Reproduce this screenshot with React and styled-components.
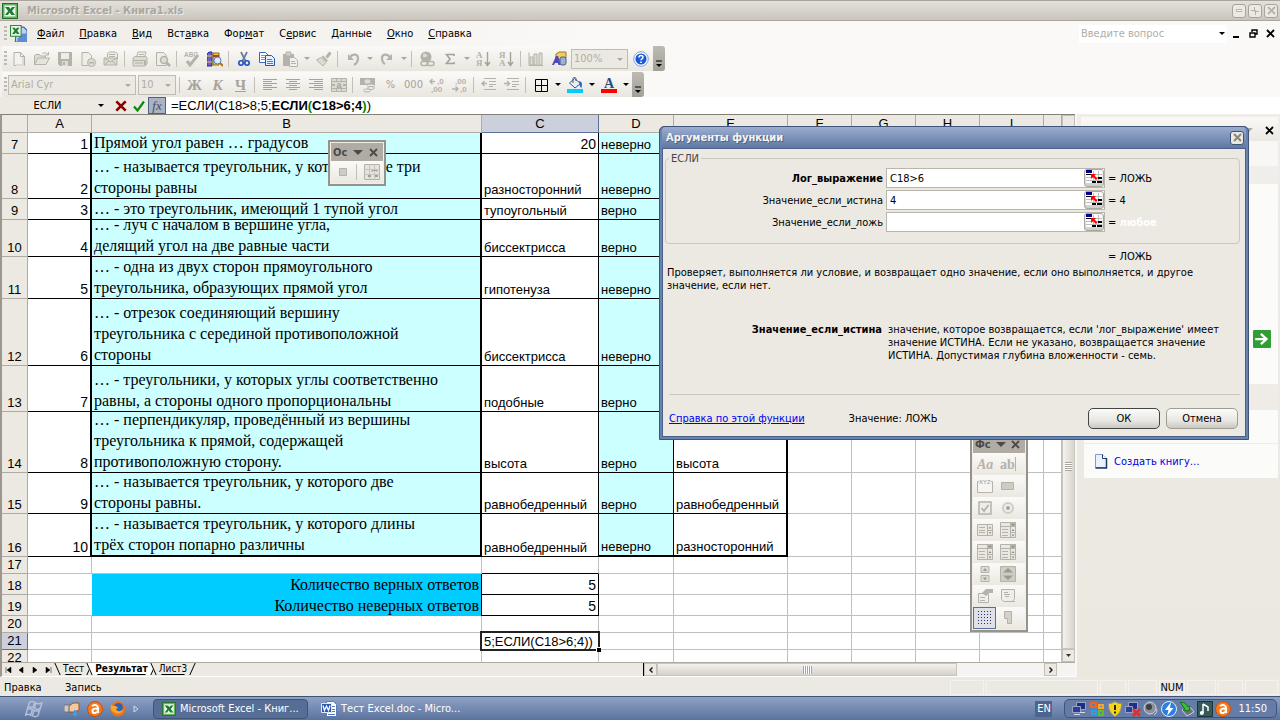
import React from 'react';
import styled, { createGlobalStyle, css } from 'styled-components';

const ui = `'DejaVu Sans Condensed', 'DejaVu Sans', sans-serif`;
const arial = `'Liberation Sans', Arial, sans-serif`;
const times = `'Liberation Serif', 'Times New Roman', serif`;

const GlobalStyle = createGlobalStyle`
  * {
    box-sizing: border-box;
  }

  body {
    margin: 0;
    overflow: hidden;
    background: #ece9e2;
    color: #000;
    font-family: ${ui};
    font-size: 11px;
    line-height: 13px;
  }

  button,
  input,
  select {
    margin: 0;
    padding: 0;
    border: 0;
    border-radius: 0;
    background: none;
    color: inherit;
    font: inherit;
    outline: none;
  }

  svg {
    display: block;
    flex: none;
  }
`;

/* ---------- icons ---------- */

const g = '#b5b2aa';
const l = '#dedbd3';

const glyphs = {
  newFile: (
    <>
      <path d='M3 1.5h6.500l4 4v9H3z' fill='#f4f2ee' stroke={g} />
      <path d='M9.500 1.500v4h4' fill='none' stroke={g} />
      <path d='M12 6v8H5' fill='none' stroke={l} strokeWidth='2' />
    </>
  ),
  open: (
    <>
      <path d='M.5 13.500v-9l1-1h4l1 1.500h5V7' fill={l} stroke={g} />
      <path d='M.5 13.500L4 7h11.500l-3.500 6.500z' fill='#e6e3dc' stroke={g} />
      <path d='M8 3c2-2 4-1.500 6 .5M14.500 1v3H11' fill='none' stroke={g} />
    </>
  ),
  save: (
    <>
      <path d='M1 1h14v14H3l-2-2z' fill={g} />
      <path d='M4 2h8v6H4z' fill='#efede8' />
      <path d='M5 10h6v5H5z' fill={l} />
      <path d='M6 11h2v3H6z' fill={g} />
    </>
  ),
  permission: (
    <>
      <path d='M2 1.500h6.500l3 3v10H2z' fill='#efede8' stroke={g} />
      <circle cx='11.500' cy='11.500' r='4' fill={l} stroke={g} />
      <path d='M9 11h5v1.500H9z' fill={g} />
    </>
  ),
  mail: (
    <>
      <path d='M4.500 6V2.500l2-1.500h6l2 2v5' fill='#efede8' stroke={g} />
      <path d='M1 7h13v7H1z' fill={l} stroke={g} />
      <path d='M1 7l6.500 4L14 7M1 14l5-4M14 14l-5-4' fill='none' stroke={g} />
      <path d='M6 3.500h6M6 5.500h6' stroke={g} />
    </>
  ),
  print: (
    <>
      <path d='M4.500 6l1.500-5h8l-1.500 5' fill='#f2f0ec' stroke={g} />
      <path d='M1 7l2-1.500h11l1 1.500v6l-2 2H1z' fill={l} stroke={g} />
      <path d='M1 9.500h12M3 12h8M7 3.500h5' stroke={g} />
      <path d='M13 9v5' stroke={g} strokeWidth='2' />
    </>
  ),
  preview: (
    <>
      <path d='M1.500 1.500h7l3 3v10h-10z' fill='#efede8' stroke={g} />
      <circle cx='9' cy='9' r='3.500' fill={l} stroke={g} strokeWidth='1.500' />
      <path d='M11.500 11.500l3.500 3.500' stroke={g} strokeWidth='2.500' />
    </>
  ),
  spelling: (
    <>
      <text x='0' y='6' fontFamily='Liberation Sans' fontWeight='700' fontSize='6.500' fill={g}>
        ABC
      </text>
      <path d='M3 10l3 4 8-10' fill='none' stroke={g} strokeWidth='3' />
    </>
  ),
  research: (
    <>
      <path d='M0 3l2-2h3v14H0z' fill='#6a5fd0' stroke='#2b2a86' />
      <path d='M6 2h6v12H6z' fill='#f2c83a' stroke='#8a6a13' />
      <path d='M0 5h5M0 11h5' stroke='#f2c83a' />
      <path d='M6 5h6' stroke='#b03a2c' strokeWidth='2' />
      <circle cx='10.500' cy='9.500' r='3.500' fill='#d9efff' stroke='#4a7fc8' />
      <path d='M13 12l3 3' stroke='#b0721a' strokeWidth='2' />
    </>
  ),
  cut: (
    <>
      <path d='M5 1l4.500 9M11 1L6.500 10' fill='none' stroke='#6d7f9e' strokeWidth='1.800' />
      <circle cx='5' cy='12' r='2.200' fill='none' stroke='#1d4fc4' strokeWidth='1.600' />
      <circle cx='11' cy='12' r='2.200' fill='none' stroke='#1d4fc4' strokeWidth='1.600' />
    </>
  ),
  copy: (
    <>
      <path d='M.5 1.500h6l3 3v7h-9z' fill='#fff' stroke='#3b64b4' />
      <path d='M2 4.500h4M2 6.500h5M2 8.500h4' stroke='#6f94d8' />
      <path d='M6.500 4.500h6l3 3v7h-9z' fill='#e4eeff' stroke='#2a56ab' />
      <path d='M8 8.500h5M8 10.500h6M8 12.500h6' stroke='#4c7bd0' />
    </>
  ),
  paste: (
    <>
      <path d='M1 3h11v12H1z' fill={g} />
      <path d='M4 1h5v4H4z' fill='#d2cfc7' stroke={g} />
      <path d='M7.500 6.500h5l3 3v6h-8z' fill='#f2f0ec' stroke={g} />
      <path d='M9 10.500h4M9 12.500h5' stroke={g} />
    </>
  ),
  painter: (
    <>
      <path d='M14.500 1.500l-4 5' stroke={g} strokeWidth='3' />
      <path d='M7 4.500l5 5-1.500 1.500-5-5z' fill={g} />
      <path d='M5 6.500l5 5-3 3.500-6.500-6z' fill={l} stroke={g} />
    </>
  ),
  undo: (
    <>
      <path d='M3 3v6h6z' fill={g} />
      <path d='M4.500 6.500c4-5 9-3 8.500 1.500-.3 3-2 5-4 6' fill='none' stroke={g} strokeWidth='2.200' />
    </>
  ),
  redo: (
    <>
      <path d='M13 3v6H7z' fill={g} />
      <path d='M11.500 6.500c-4-5-9-3-8.500 1.500.3 3 1 4 3 5' fill='none' stroke={g} strokeWidth='2.200' />
    </>
  ),
  link: (
    <>
      <circle cx='7' cy='6' r='5.500' fill={g} />
      <path d='M4 3c2-1 3 0 4 1s-2 3-4 2z' fill={l} />
      <rect x='2' y='10.500' width='7' height='4' rx='2' fill='#efede8' stroke={g} strokeWidth='1.500' />
      <rect x='8' y='10.500' width='7' height='4' rx='2' fill='none' stroke={g} strokeWidth='1.500' />
    </>
  ),
  sum: <path d='M12 5V3.500H4.500L8 8l-3.500 4.500H12V11' fill='none' stroke='#a5a29b' strokeWidth='1.600' />,
  sortAsc: (
    <>
      <text x='0' y='7' fontFamily='Liberation Serif' fontWeight='700' fontSize='9' fill={g}>А</text>
      <text x='0' y='15' fontFamily='Liberation Serif' fontWeight='700' fontSize='9' fill={g}>Я</text>
      <path d='M11.500 1v12M9 11l2.500 3.500L14 11' fill='none' stroke='#a5a29b' strokeWidth='1.400' />
    </>
  ),
  sortDesc: (
    <>
      <text x='0' y='7' fontFamily='Liberation Serif' fontWeight='700' fontSize='9' fill={g}>Я</text>
      <text x='0' y='15' fontFamily='Liberation Serif' fontWeight='700' fontSize='9' fill={g}>А</text>
      <path d='M11.500 1v12M9 11l2.500 3.500L14 11' fill='none' stroke='#a5a29b' strokeWidth='1.400' />
    </>
  ),
  chart: (
    <>
      <path d='M1 1.500v13h14' fill='none' stroke={g} />
      <path d='M2 6h3v8H2zM6 3h3v11H6zM11 2h3v12h-3z' fill={l} stroke={g} />
    </>
  ),
  drawing: (
    <>
      <path d='M5 3l3-2h7v6l-3 2H5z' fill='#f2cc60' stroke='#9a7a25' />
      <path d='M1 14L5 5h2l3 9H7.500l-.7-2H4l-1 2z' fill='#4d49b8' />
      <rect x='9' y='6' width='6' height='8' rx='2' fill='#9bb1d6' stroke='#4a5f8a' />
    </>
  ),
  help: (
    <>
      <circle cx='8' cy='8' r='7.300' fill='#fff' stroke='#7fa0de' />
      <circle cx='8' cy='8' r='5.600' fill='#1c59d4' />
      <path d='M6 6.500c0-2.700 4-2.700 4-.2 0 1.500-2 1.500-2 3' fill='none' stroke='#fff' strokeWidth='1.500' />
      <path d='M7.200 10.500h1.600V12H7.200z' fill='#fff' />
    </>
  ),
  left: <path d='M1 2.500h14M1 4.500h9M1 6.500h14M1 8.500h9M1 10.500h14M1 12.500h9' stroke='#a5a29b' />,
  center: <path d='M1 2.500h14M4 4.500h8M1 6.500h14M4 8.500h8M1 10.500h14M4 12.500h8' stroke='#a5a29b' />,
  right: <path d='M1 2.500h14M6 4.500h9M1 6.500h14M6 8.500h9M1 10.500h14M6 12.500h9' stroke='#a5a29b' />,
  merge: (
    <>
      <path d='M.5 1.500h15v13H.5zM.5 4.500h15M.5 11.500h15M5.500 1.500v3M10.500 1.500v3M5.500 11.500v3M10.500 11.500v3' fill={l} stroke={g} />
      <path d='M1 8h3M12 8h3' stroke={g} strokeWidth='2' />
      <text x='5.500' y='10.500' fontFamily='Liberation Sans' fontWeight='700' fontSize='9' fill='#a5a29b'>a</text>
    </>
  ),
  currency: (
    <>
      <path d='M0 1h15v7H0z' fill={g} />
      <ellipse cx='7.500' cy='4.500' rx='3' ry='2.200' fill={l} />
      <ellipse cx='11' cy='8.500' rx='3.500' ry='1.500' fill='#efede8' stroke={g} />
      <ellipse cx='11' cy='11' rx='3.500' ry='1.500' fill='#efede8' stroke={g} />
      <ellipse cx='7' cy='13.500' rx='3.500' ry='1.500' fill='#efede8' stroke={g} />
    </>
  ),
  incDecimal: (
    <>
      <path d='M1 4.500h5M3.500 2L1 4.500 3.500 7' fill='none' stroke={g} strokeWidth='1.400' />
      <text x='8' y='7' fontFamily='Liberation Sans' fontWeight='700' fontSize='8' fill={g}>,0</text>
      <text x='2' y='15' fontFamily='Liberation Sans' fontWeight='700' fontSize='8' fill={g}>,00</text>
    </>
  ),
  decDecimal: (
    <>
      <text x='3' y='7' fontFamily='Liberation Sans' fontWeight='700' fontSize='8' fill={g}>,00</text>
      <path d='M0 12h6M3.500 9.500L6 12l-2.500 2.500' fill='none' stroke={g} strokeWidth='1.400' />
      <text x='8' y='15' fontFamily='Liberation Sans' fontWeight='700' fontSize='8' fill={g}>,0</text>
    </>
  ),
  outdent: (
    <>
      <path d='M3 1.500h12M8 4.500h7M8 7.500h7M8 9.500h4M3 12.500h12' stroke={g} />
      <path d='M1 6.500h5M3.500 4L1 6.500 3.500 9' fill='none' stroke={g} strokeWidth='1.400' />
    </>
  ),
  indent: (
    <>
      <path d='M3 1.500h12M8 4.500h7M8 7.500h7M8 9.500h4M3 12.500h12' stroke={g} />
      <path d='M0 6.500h5M3 4l2.500 2.500L3 9' fill='none' stroke={g} strokeWidth='1.400' />
    </>
  ),
  borders: <path d='M2.500 2.500h12v12h-12zM2.500 8.500h12M8.500 2.500v12' fill='none' stroke='#000' />,
  fill: (
    <>
      <path d='M7.500 1.500l6 5L8 11 2.500 6z' fill='#e8eef9' stroke='#2a5a9e' />
      <path d='M6 6V1.500c0-1.500 3-1.500 3 0V4' fill='none' stroke='#555' />
      <path d='M12 4c4 1 3 4 2.500 7-2-1-2-3-2-5z' fill='#2c67b8' />
      <path d='M0 12h16v4H0z' fill='#0cf' />
    </>
  ),
  fontColor: (
    <>
      <text x='3' y='11' fontFamily='Liberation Serif' fontWeight='700' fontSize='14' fill='#2b4a86'>A</text>
      <path d='M0 12h16v4H0z' fill='#f00' />
    </>
  ),
  excel: (
    <>
      <path d='M0 0h16v16H0z' fill='#1f6f2a' />
      <path d='M1 1h14v14H1z' fill='#5fb45c' />
      <path d='M2.500 2.500h11v11h-11z' fill='#eef7ec' />
      <path d='M3 4h4l1.500 2L10 4h3l-3 4 3 4H9.500L7.500 9.500 6 12H3l3.200-4z' fill='#1f7a33' />
    </>
  ),
  excelDoc: (
    <>
      <path d='M6 2h7l3 3v11H5z' fill='#b9d2f5' stroke='#3a62a8' />
      <path d='M12 8h4v8H7v-3' fill='#5f8bd2' />
      <path d='M.5.5h10v10H.5z' fill='#e9f5e6' stroke='#2a8a38' />
      <path d='M2 2.500h2.500L5.500 4l1-1.500H9L6.800 5.500 9 8.500H6.500L5.500 7l-1 1.500H2l2.200-3z' fill='#1f7a33' />
    </>
  ),
  word: (
    <>
      <path d='M5.500.5h7l3 3v12h-10z' fill='#fff' stroke='#5a7ab5' />
      <path d='M11 5.500h3M11 8.500h3M11 10.500h3M7 13.500h7' stroke='#5a7ab5' />
      <path d='M.5 2.500h10v9H.5z' fill='#2c58b0' stroke='#dfe9fb' />
      <path d='M2 4.500l1.500 5L5.500 5l2 4.500 1.500-5' fill='none' stroke='#fff' strokeWidth='1.300' />
    </>
  ),
  designMode: (
    <>
      <path d='M.5.5h15v15H.5z' fill='#e6e3dc' stroke={g} />
      <path d='M.5 5.500h15M.5 10.500h15M5.500.5v15M10.500.5v15' stroke='#c8c5bd' />
      <path d='M8 8V6.500h5V8' fill='none' stroke='#a5a29b' />
      <path d='M4 11h3v2H4zM11 11h3v2h-3z' fill='#a5a29b' />
    </>
  ),
  stop: <path d='M4.500 4.500h7v7h-7z' fill='#cfccc3' stroke={g} />,
  label: (
    <text x='0' y='13' fontFamily='Liberation Serif' fontStyle='italic' fontWeight='700' fontSize='14' fill={g}>Aa</text>
  ),
  textBox: (
    <>
      <text x='0' y='13' fontFamily='Liberation Serif' fontSize='14' fontWeight='700' fill={g}>ab</text>
      <path d='M15.500 1v14' stroke={g} />
    </>
  ),
  groupBox: (
    <>
      <path d='M2 3.500H.5v11h15v-11H14' fill='#f6f5f2' stroke={g} />
      <text x='2' y='6' fontFamily='Liberation Sans' fontWeight='700' fontSize='6' fill={g}>XYZ</text>
    </>
  ),
  button: <path d='M1.500 4.500h12v7h-12z' fill='#cfccc3' stroke={g} />,
  check: (
    <>
      <path d='M2 2h12v12H2z' fill='#f0eee9' stroke={g} strokeWidth='1.500' />
      <path d='M4.500 8l2.500 3 4.500-6' fill='none' stroke={g} strokeWidth='1.800' />
    </>
  ),
  radio: (
    <>
      <circle cx='8' cy='8' r='5' fill='#f0eee9' stroke='#cfccc3' strokeWidth='2' />
      <circle cx='8' cy='8' r='2' fill='#a5a29b' />
    </>
  ),
  list: (
    <>
      <path d='M.5 2.500h15v11H.5z' fill='#ebe8e2' stroke={g} />
      <path d='M2 5.500h6M2 8.500h6M2 10.500h6M10.500 2.500v11M10.500 8.500h5' stroke={g} />
      <path d='M11.500 6.500h3L13 4.500zM11.500 10h3L13 12z' fill='#9b9890' />
    </>
  ),
  combo: (
    <>
      <path d='M.5.5h15v15H.5z' fill='#ebe8e2' stroke={g} />
      <path d='M10 0h6v5h-6z' fill={g} />
      <path d='M.5 4.500h15M2 7.500h6M2 10.500h6M2 13.500h6M10.500 5v11M10.500 10.500h5' stroke={g} />
      <path d='M11.500 2h3L13 4zM11.500 9h3L13 7zM11.500 12.500h3L13 14.500z' fill='#8f8c84' />
    </>
  ),
  scroll: (
    <>
      <path d='M4 .5h8v6H4zM4 9.500h8v6H4z' fill={l} stroke={g} />
      <path d='M6 5h4L8 2zM6 11.500h4l-2 3z' fill='#9b9890' />
    </>
  ),
  spin: (
    <>
      <path d='M.5.5h15v15H.5z' fill='#cfccc3' stroke={g} />
      <path d='M3 6.500h10L8 2zM3 9.500h10L8 14z' fill='#9b9890' />
    </>
  ),
  props: (
    <>
      <path d='M1.500 5.500h10v9h-10z' fill='#f0eee9' stroke={g} />
      <path d='M3 9.500h5M3 12.500h5' stroke={g} />
      <path d='M5 5l4-4h7v4h-4l-3 3z' fill={g} />
    </>
  ),
  code: (
    <>
      <path d='M1.500 1.500h13v9l-2 3h-9l-2-2z' fill='#f0eee9' stroke={g} />
      <path d='M4 4.500h4M4 6.500h6M5 8.500h4M6 13.500h9' stroke={g} />
    </>
  ),
  grid: (
    <path
      d='M1 1.500h15M1 4.500h15M1 7.500h15M1 10.500h15M1 13.500h15'
      stroke='#24386b'
      strokeDasharray='1 2'
    />
  ),
  run: <path d='M4.500 1.500h7v12h-4v-5h-3z' fill='#d4d1c9' stroke={g} />,
  picker: (
    <>
      <path d='M0 1h16v12H0z' fill='#fff' />
      <path d='M0 4.500h16M0 7.500h16M0 10.500h16M7.500 1v12M12.500 1v12' stroke='#bbb' />
      <path d='M0 0h6v3H0z' fill='#00008b' />
      <path d='M0 4h6v1H0zM12 7h4v2h-4zM6 11h4v2H6zM11 11h5v2h-5z' fill='#000' />
      <path d='M5 4h5L8.500 5.500l3 3L10 10 7 7 5 9z' fill='#f00' />
    </>
  ),
  sheet: (
    <>
      <path d='M2.500 1.500h7l4 4v9h-11z' fill='#eaf1fc' stroke='#7f9bc8' />
      <path d='M9.500 1.500v4h4' fill='#fff' stroke='#1f3a66' />
      <path d='M13.500 5v10h-11' fill='none' stroke='#1f3a66' strokeWidth='1.500' />
    </>
  ),
  windows: (
    <>
      <path d='M4 2c2-1 3-1 4.500 0L7 7C5.500 6 4 6 2.500 7zM9.500 2.500C11 3.500 13 3.500 15 2.500l-1.500 5c-1.500 1-3.500 1-5 0z' fill='none' stroke='#b3bfd6' strokeWidth='1.300' />
      <path d='M2 8.500c2-1 3-1 4.500 0L5 13.500c-1.500-1-3-1-4.500 0zM8 9c1.500 1 3.500 1 5 0l-1.500 5c-1.500 1-3.500 1-5 0z' fill='none' stroke='#b3bfd6' strokeWidth='1.300' />
    </>
  ),
  drive: (
    <>
      <path d='M0 4h8v7H0z' fill='#c9ccd0' stroke='#777' />
      <path d='M5 5l4-3h6v7l-4 2H5z' fill='#f2c9a0' stroke='#8a5a35' />
      <path d='M8 12h6l-3 4z' fill='#3fa0ee' />
      <path d='M10 9h2v4h-2z' fill='#3fa0ee' />
    </>
  ),
  avast: (
    <>
      <circle cx='8' cy='8' r='7.500' fill='#f47a1c' stroke='#c8500a' />
      <path d='M5 5c3-2 6-1 6 2v5M11 8c-3-1-6 0-5.500 2.500s4.500 2 5.500-1' fill='none' stroke='#fff' strokeWidth='2' />
    </>
  ),
  firefox: (
    <>
      <circle cx='8' cy='8' r='7.500' fill='#e8731a' />
      <circle cx='8.500' cy='6.500' r='4.500' fill='#2f62b8' />
      <path d='M1 4c2 1 3 1 5 1l2 2-2 1c1 3 5 3 7 0 0 4-4 6-8 4S0 7 1 4z' fill='#f9a72b' />
    </>
  ),
  network: (
    <>
      <path d='M5.500 1.500h9v7h-9z' fill='#1c2f88' stroke='#9aa3c0' />
      <path d='M1.500 5.500h8v6h-8z' fill='#2a409c' stroke='#9aa3c0' />
      <path d='M3 13.500h6M9 11.500h5' stroke='#d7dbe6' />
    </>
  ),
  office: (
    <>
      <path d='M2 2h5v4H2z' fill='none' stroke='#f0642a' strokeWidth='2' />
      <path d='M10 4h4v3h-4z' fill='none' stroke='#f5a62c' strokeWidth='2' />
      <path d='M3 10h4v3H3z' fill='none' stroke='#2f9fe8' strokeWidth='2' />
      <path d='M10 10h4v4h-4z' fill='none' stroke='#69b832' strokeWidth='2' />
    </>
  ),
  shield: (
    <>
      <path d='M8 .5c2 1.500 4 2 6.500 2 0 6-1.500 10-6.500 13C3 12.500 1.500 8.500 1.500 2.500 4 2.500 6 2 8 .5z' fill='#f7d516' stroke='#8d8f96' />
      <path d='M7 4h2v5H7zM7 10.500h2v2H7z' fill='#222' />
    </>
  ),
  offline: (
    <>
      <path d='M3.500 1.500h9v7h-9z' fill='#1c2f88' stroke='#9aa3c0' />
      <path d='M.5 5.500h7v6h-7z' fill='#2a409c' stroke='#9aa3c0' />
      <path d='M8 8l7 7M15 8l-7 7' stroke='#f02a20' strokeWidth='2.500' />
    </>
  ),
  speaker: (
    <>
      <circle cx='7' cy='7' r='6' fill='#8d9096' stroke='#d0d3d8' />
      <circle cx='6' cy='6' r='3' fill='#3d4046' />
      <path d='M11 14c2-1 3-3 3-6' fill='none' stroke='#cdd3e6' />
    </>
  ),
  bolt: (
    <>
      <circle cx='8' cy='8' r='7.500' fill='#2a7fe0' stroke='#e3eefc' />
      <path d='M10 1L4 9h3.500L6 15l6.500-8H9z' fill='#fff' />
    </>
  ),
  usb: (
    <>
      <path d='M3 9l8-3 4 5-7 4z' fill='#6d7178' stroke='#cdd0d5' />
      <path d='M1 1l5 1 3 4 2-1-1 5-6-1 2-1z' fill='#3cc23a' stroke='#16771a' />
    </>
  ),
  note: (
    <>
      <path d='M.5.500h15v15H.5z' fill='#355a58' stroke='#1c3434' />
      <path d='M6 3v9M6 3l5 3v4' fill='none' stroke='#fff' strokeWidth='1.500' />
      <circle cx='4.800' cy='12' r='2' fill='#fff' />
    </>
  ),
  go: (
    <>
      <rect width='16' height='16' rx='1' fill='#2e9e35' />
      <path d='M2 8h10M7 3.500L12 8 7 12.500' fill='none' stroke='#fff' strokeWidth='2' />
    </>
  ),
};

const Icon = ({ name, size = 16 }) => (
  <svg width={size} height={size} viewBox='0 0 16 16' aria-hidden='true'>
    {glyphs[name]}
  </svg>
);

const Cross = ({ size = 9, color = '#000', weight = 1.8 }) => (
  <svg width={size} height={size} viewBox='0 0 9 9' aria-hidden='true'>
    <path d='M1 1l7 7M8 1L1 8' stroke={color} strokeWidth={weight} fill='none' />
  </svg>
);

/* ---------- window frame ---------- */

const Screen = styled.div`
  height: 100vh;
  display: flex;
  flex-direction: column;
`;

const TitleBar = styled.header`
  height: 21px;
  flex: none;
  display: flex;
  align-items: center;
  gap: 9px;
  padding: 0 2px;
  border-top: 1px solid #aaa69f;
  border-bottom: 1px solid #aaa69f;
  background: linear-gradient(#e4e1db, #c9c5bd);
`;

const WindowTitle = styled.h1`
  flex: 1;
  margin: 0;
  color: #aba79f;
  font-size: 11px;
  line-height: 13px;
  text-shadow: 1px 1px 0 #eeece7;
`;

const CaptionButtons = styled.div`
  display: flex;
  gap: 2px;
`;

const CaptionButton = styled.button`
  width: 14px;
  height: 14px;
  display: flex;
  align-items: center;
  justify-content: center;
  border: 1px solid ${(p) => (p.$active ? '#3f5478' : '#a8a49c')};
  border-radius: 3px;
  background: #ece9e2;
`;

const MenuBar = styled.nav`
  height: 25px;
  flex: none;
  display: flex;
  align-items: center;
  padding: 0 2px 0 4px;
  background: linear-gradient(90deg, #efece7, #faf9f7 600px);
`;

const Grip = styled.span`
  width: 3px;
  height: 16px;
  flex: none;
  background: repeating-linear-gradient(#bdbab2 0 2px, transparent 2px 4px);
`;

const Menu = styled.div`
  flex: 1;
  display: flex;
`;

const MenuItem = styled.button`
  padding: 0 8px 0 7px;
  line-height: 20px;
`;

const Ask = styled.div`
  width: 148px;
  height: 18px;
  display: flex;
  align-items: center;
  margin-right: 2px;
  background: #fff;
`;

const AskInput = styled.input`
  flex: 1;
  min-width: 0;
  padding-left: 2px;

  &::placeholder {
    color: #b0ada6;
    opacity: 1;
  }
`;

const ArrowButton = styled.button`
  width: 11px;
  height: 16px;
  flex: none;
  display: flex;
  align-items: center;
  justify-content: center;

  &::after {
    content: '';
    border: 3px solid transparent;
    border-top-color: ${(p) => (p.$on ? '#000' : '#aaa79f')};
    border-bottom: 0;
  }
`;

const DocButtons = styled.div`
  display: flex;
  align-items: center;
  gap: 2px;

  button {
    width: 15px;
    height: 15px;
    display: flex;
    align-items: center;
    justify-content: center;
  }
`;

/* ---------- toolbars ---------- */

const ToolbarDock = styled.div`
  flex: none;
  display: flex;
  flex-direction: column;
  gap: 1px;
  background: linear-gradient(90deg, #f3f1ed, #faf9f7 600px);
`;

const Toolbar = styled.div`
  width: fit-content;
  height: 25px;
  display: flex;
  align-items: center;
  margin-left: 2px;
  padding-left: 2px;
  border-radius: 3px;
  background: linear-gradient(#fbfaf8, #e9e6df);
`;

const Tool = styled.button`
  width: 23px;
  height: 22px;
  flex: none;
  display: flex;
  align-items: center;
  justify-content: center;
  color: #a5a29b;
`;

const Letter = styled.span`
  font-family: ${times};
  font-size: 15px;
  font-weight: bold;
  line-height: 16px;
  ${(p) => p.$italic && 'font-style: italic;'}
  ${(p) => p.$underline && 'text-decoration: underline;'}
`;

const Sep = styled.span`
  width: 6px;
  height: 16px;
  flex: none;
  background: linear-gradient(90deg, transparent 2px, #c2bfb8 2px 3px, transparent 3px);
`;

const ComboFrame = styled.div`
  position: relative;
  width: ${(p) => p.$width}px;
  height: 20px;
  margin: 0 1px;
  border: 1px solid #bfbcb4;
  background: #ece9e2;

  select {
    width: 100%;
    height: 100%;
    padding-left: 2px;
    appearance: none;
    color: #b0ada6;
    opacity: 1;
  }

  &::after {
    content: '';
    position: absolute;
    right: 4px;
    top: 8px;
    border: 3px solid transparent;
    border-top-color: #aaa79f;
    border-bottom: 0;
    pointer-events: none;
  }
`;

const ToolbarEnd = styled.button`
  width: 12px;
  height: 25px;
  margin-left: 1px;
  display: flex;
  align-items: flex-end;
  justify-content: center;
  padding-bottom: 3px;
  border-radius: 0 3px 3px 0;
  background: linear-gradient(#bdbab3, #a3a098);
`;

const FormulaBar = styled.div`
  height: 17px;
  flex: none;
  display: flex;
  align-items: center;
  background: #fff;
`;

const NameBox = styled.div`
  width: 148px;
  height: 17px;
  display: flex;
  align-items: center;
  background: #ece9e2;
`;

const NameInput = styled.input`
  width: 95px;
  text-align: center;
`;

const FormulaTools = styled.div`
  display: flex;
  align-items: center;
  justify-content: space-around;
  flex: 1;
  padding: 0 0 0 6px;

  button {
    display: flex;
  }
`;

const FxButton = styled.button`
  width: 18px;
  height: 17px;
  border: 1px solid #4a618c;
  background: #a9b2c7;
  color: #4d4d50;
  font-family: ${times};
  font-size: 13px;
  font-style: italic;
  line-height: 13px;
`;

const Formula = styled.div`
  flex: 1;
  padding-left: 5px;
  font-family: ${arial};
  font-size: 13px;
  line-height: 16px;

  i {
    color: #008a00;
    font-style: normal;
  }
`;

/* ---------- sheet ---------- */

const Workspace = styled.main`
  flex: 1;
  min-height: 0;
  display: flex;
`;

const Book = styled.section`
  flex: 1;
  min-width: 0;
  display: flex;
  flex-direction: column;
  border-top: 1px solid #848077;
  border-left: 2px solid #9b978f;
  border-bottom: 1px solid #fff;
`;

const SheetArea = styled.div`
  flex: 1;
  min-height: 0;
  display: flex;
`;

const Viewport = styled.div`
  flex: 1;
  min-width: 0;
  overflow: hidden;
  background: #fff;
`;

const Table = styled.table`
  width: 100%;
  border-collapse: separate;
  border-spacing: 0;
  table-layout: fixed;
  font-family: ${arial};
  font-size: 14px;

  th,
  td {
    padding: 0;
  }
`;

const Head = styled.th`
  height: ${(p) => p.$height || 17}px;
  border-right: 1px solid ${(p) => (p.$selected ? '#5a7099' : '#aeaba3')};
  border-bottom: 1px solid ${(p) => (p.$selected ? '#5a7099' : '#aeaba3')};
  background: ${(p) => (p.$selected ? '#ccd0dd' : '#ece9e2')};
  font-size: 13px;
  font-weight: normal;
  line-height: 16px;
  vertical-align: bottom;
`;

const line = (kind) =>
  ({ thin: '1px solid #000', thick: '2px solid #000', none: '0' })[kind] || '1px solid #c0c0c0';

const Cell = styled.td`
  position: relative;
  height: ${(p) => p.$height}px;
  border-right: ${(p) => line(p.$right)};
  border-bottom: ${(p) => line(p.$bottom)};
  background: ${(p) => p.$fill || '#fff'};
`;

const CellText = styled.div`
  height: ${(p) => p.$height - 1}px;
  display: flex;
  flex-direction: column;
  justify-content: flex-end;
  overflow: hidden;
  padding: 0 2px;
  line-height: 17px;
  white-space: pre;
  text-align: ${(p) => p.$align || 'left'};
  ${(p) => p.$small && 'font-size: 13px; line-height: 16px;'}
  ${(p) =>
    p.$serif &&
    css`
      font-family: ${times};
      font-size: 16px;
      line-height: 21px;
    `}
`;

const CellEditor = styled.input`
  position: absolute;
  z-index: 1;
  inset: -2px;
  width: calc(100% + 4px);
  height: 20px;
  padding-left: 2px;
  border: 2px solid #222;
  background: #fff;
  font-size: 13px;
`;

const FillHandle = styled.span`
  position: absolute;
  z-index: 2;
  right: -3px;
  bottom: -3px;
  width: 5px;
  height: 5px;
  border: solid #fff;
  border-width: 1px 0 0 1px;
  background: #000;
`;

const VScroll = styled.div`
  width: 13px;
  display: flex;
  flex-direction: column;
  background: #f8f6f5;
`;

const VThumb = styled.div`
  flex: 1;
  display: flex;
  align-items: center;
  justify-content: center;
  padding-top: 156px;
  border: 1px solid #c9c6bf;
  background: linear-gradient(90deg, #f4f2ef, #d8d5cf);
`;

const Ridges = styled.span`
  width: ${(p) => (p.$across ? 9 : 7)}px;
  height: ${(p) => (p.$across ? 8 : 9)}px;
  background: repeating-linear-gradient(
    ${(p) => (p.$across ? '90deg' : '180deg')},
    #a8a59e 0 1px,
    #fff 1px 2px
  );
`;

const ScrollButton = styled.button`
  width: 13px;
  height: 13px;
  flex: none;
  display: flex;
  align-items: center;
  justify-content: center;
  border: 1px solid #c2bfb8;
  background: #ece9e2;
`;

const BottomBar = styled.div`
  height: 14px;
  flex: none;
  display: flex;
  border-top: 1px solid #aeaba3;
`;

const TabNav = styled.div`
  width: 53px;
  display: flex;
  align-items: center;
  justify-content: space-around;

  button {
    width: 12px;
    display: flex;
    justify-content: center;
  }
`;

const Tabs = styled.div`
  flex: 1;
  display: flex;
  padding-left: 5px;
`;

const Tab = styled.button`
  position: relative;
  height: 12px;
  margin-right: 5px;
  padding: 0 3px;
  border-bottom: 1px solid #000;
  background: ${(p) => (p.$active ? '#fff' : '#ece9e2')};
  font-size: 10px;
  font-weight: ${(p) => (p.$active ? 'bold' : 'normal')};
  line-height: 11px;

  &::before,
  &::after {
    content: '';
    position: absolute;
    top: 0;
    bottom: -1px;
    width: 5px;
    background: inherit;
  }

  &::before {
    left: -3px;
    border-left: 1px solid #000;
    transform: skewX(24deg);
  }

  &::after {
    right: -3px;
    border-right: 1px solid #000;
    transform: skewX(-24deg);
  }

  span {
    position: relative;
    z-index: 1;
  }
`;

const HScroll = styled.div`
  width: 432px;
  display: flex;
  padding-right: 18px;
  border-left: 1px solid #000;
  background: #f6f4f3;
`;

const HThumb = styled.div`
  width: 300px;
  display: flex;
  align-items: center;
  justify-content: center;
  border: 1px solid #c9c6bf;
  background: linear-gradient(#f4f2ef, #d5d2cb);
`;

const HTrack = styled.div`
  flex: 1;
`;

/* ---------- task pane ---------- */

const TaskPane = styled.aside`
  width: 205px;
  display: flex;
  flex-direction: column;
  padding: 3px 2px 0 4px;
  border-left: 2px solid #f8f7f4;
  background: linear-gradient(#efece9, #ebe8df);
`;

const PaneHeader = styled.div`
  height: 24px;
  display: flex;
  align-items: center;
  justify-content: flex-end;
  gap: 12px;
  padding: 2px 4px 0 0;
  background: linear-gradient(#faf9f7, #ebe8e2);
`;

const PaneBody = styled.div`
  margin-left: 3px;
  background: #fbfbf9;
`;

const PaneBand = styled.div`
  height: ${(p) => p.$height}px;
  background: ${(p) => p.$color};
`;

const PaneSearch = styled.div`
  height: 200px;
  display: flex;
  align-items: flex-end;
  justify-content: flex-end;
  padding: 0 7px 36px 0;
`;

const PaneLink = styled.a`
  height: 35px;
  display: flex;
  align-items: center;
  gap: 5px;
  padding-left: 9px;
  border-top: 1px solid #eeece8;
  color: #0000e0;
  text-decoration: none;
`;

/* ---------- floating toolbars ---------- */

const Floating = styled.div`
  position: absolute;
  z-index: 2;
  left: ${(p) => p.$x}px;
  top: ${(p) => p.$y}px;
  width: 58px;
  border: 2px solid #96938d;
  background: #f0eee9;
  padding: 1px;
`;

const FloatingTitle = styled.div`
  height: 18px;
  display: flex;
  align-items: center;
  justify-content: space-between;
  padding: 0 5px 0 2px;
  background: #b0aca3;
  color: #4a4a48;
  font-weight: bold;
`;

const FloatingRow = styled.div`
  height: 22px;
  display: flex;
  align-items: center;
  background: linear-gradient(#fbfaf8, #ebe8e1);
`;

const ControlTool = styled(Tool)`
  ${(p) =>
    p.$pressed &&
    css`
      border: 1px solid #5a7099;
      background: #dfe1e6;
    `}
`;

/* ---------- dialog ---------- */

const Dialog = styled.section`
  position: absolute;
  z-index: 3;
  left: 659px;
  top: 126px;
  width: 590px;
  border: 1px solid #3f5478;
  border-radius: 5px 5px 0 0;
  background: #6883ad;
  padding: 0 2px 2px;
`;

const DialogTitle = styled.div`
  height: 21px;
  display: flex;
  align-items: center;
  justify-content: space-between;
  padding: 0 2px 0 4px;
  border-radius: 4px 4px 0 0;
  background: linear-gradient(#9bacd0, #5f79a3);

  h2 {
    margin: 0;
    color: #f5f4ee;
    font-size: 11px;
    text-shadow: 1px 1px 0 #4a618c;
  }
`;

const DialogBody = styled.form`
  padding: 3px 5px 7px 2px;
  border: 1px solid #4a618c;
  background: #ece9e2;
`;

const Args = styled.fieldset`
  min-width: 0;
  margin: 0;
  padding: 3px 0 11px 1px;
  border: 1px solid #c9c9c1;
  border-radius: 4px;
  display: grid;
  grid-template-columns: 216px 219px 1fr;
  column-gap: 3px;
  row-gap: 2px;
  align-items: center;

  legend {
    margin-left: 2px;
    padding: 0 2px;
    color: #444;
  }
`;

const ArgLabel = styled.label`
  text-align: right;
  font-weight: ${(p) => (p.$required ? 'bold' : 'normal')};
`;

const ArgField = styled.div`
  height: 20px;
  display: flex;
  align-items: center;
  border: 1px solid #b9b6ae;
  background: #fff;

  input {
    flex: 1;
    min-width: 0;
    padding-left: 3px;
  }

  button {
    width: 20px;
    height: 18px;
    display: flex;
    align-items: center;
    justify-content: center;
    border: 1px solid #aaa79f;
    border-radius: 3px;
    background: linear-gradient(#f8f7f5, #cfccc5);
  }
`;

const ArgValue = styled.output`
  b {
    color: #fff;
  }
`;

const Total = styled.div`
  padding: 6px 0 3px 443px;
`;

const Description = styled.p`
  height: 26px;
  margin: 0 40px 31px 2px;
`;

const ArgHelp = styled.dl`
  display: grid;
  grid-template-columns: 217px 1fr;
  column-gap: 6px;
  height: 72px;
  margin: 0 0 0 4px;
  padding-right: 8px;
  border-bottom: 1px solid #c9c9c1;
  grid-template-columns: 213px 1fr;

  dt {
    text-align: right;
    font-weight: bold;
  }

  dd {
    margin: 0;
  }
`;

const DialogFooter = styled.div`
  display: flex;
  align-items: center;
  padding: 13px 2px 0 4px;

  a {
    color: #00e;
  }

  p {
    flex: 1;
    margin: 0 0 0 44px;
  }
`;

const PushButton = styled.button`
  width: 72px;
  height: 21px;
  margin-left: 6px;
  border: 1px solid ${(p) => (p.$primary ? '#444' : '#a09d95')};
  border-radius: 5px;
  background: linear-gradient(#fbfbfa, #e9e7e2 60%, #cbc8c1);
`;

/* ---------- bottom bars ---------- */

const StatusBar = styled.footer`
  height: 19px;
  flex: none;
  display: flex;
  align-items: center;
  padding: 2px 0 0 4px;
  background: #ece9e2;
`;

const StatusText = styled.span`
  width: ${(p) => p.$width}px;
`;

const StatusPanes = styled.div`
  display: flex;
  flex: 1;
  justify-content: flex-end;
  gap: 2px;
  padding-right: 2px;
`;

const StatusPane = styled.span`
  width: ${(p) => p.$width}px;
  height: 15px;
  border: 1px solid #f4f2ee;
  text-align: center;
`;

const TaskBar = styled.footer`
  height: 24px;
  flex: none;
  display: flex;
  align-items: center;
  border-top: 1px solid #3f5273;
  background: linear-gradient(#8fa2c6, #5a739d);
  color: #fff;
`;

const StartButton = styled.button`
  width: 64px;
  padding-left: 25px;
`;

const QuickLaunch = styled.div`
  display: flex;
  align-items: center;
  gap: 7px;
  width: 89px;

  button {
    display: flex;
  }
`;

const TaskButton = styled.button`
  width: ${(p) => (p.$active ? 155 : 160)}px;
  height: 20px;
  display: flex;
  align-items: center;
  gap: 4px;
  padding-left: 8px;
  margin-right: 4px;
  border-radius: 4px;
  border: 1px solid ${(p) => (p.$active ? '#3f5578' : 'transparent')};
  background: ${(p) => (p.$active ? '#566e96' : 'transparent')};
  white-space: nowrap;
`;

const Language = styled.button`
  width: 17px;
  height: 16px;
  margin: 0 12px 0 auto;
  background: #4c648e;
`;

const Tray = styled.div`
  height: 19px;
  display: flex;
  align-items: center;
  gap: 2px;
  margin-right: 3px;
  padding: 0 9px 0 6px;
  border: 1px solid #3f5578;
  border-radius: 5px;
  background: #647ca6;

  time {
    margin-left: 5px;
  }
`;

/* ---------- data ---------- */

const aqua = '#ccffff';
const blue = '#00ccff';

const menu = [
  ['', 'Ф', 'айл'],
  ['', 'П', 'равка'],
  ['', 'В', 'ид'],
  ['Вст', 'а', 'вка'],
  ['Фор', 'м', 'ат'],
  ['С', 'е', 'рвис'],
  ['', 'Д', 'анные'],
  ['', 'О', 'кно'],
  ['', 'С', 'правка'],
];

const standard = [
  'newFile', 'open', 'save', 'permission', 'mail', '|', 'print', 'preview', '|',
  'spelling', 'research', '|', 'cut', 'copy', 'paste', 'v', 'painter', '|',
  'undo', 'v', 'redo', 'v', '|', 'link', 'sum', 'v', 'sortAsc', 'sortDesc', '|',
  'chart', 'drawing',
];

const formatting = [
  '|', 'left', 'center', 'right', 'merge', '|', 'currency', '%', '000',
  'incDecimal', 'decDecimal', '|', 'outdent', 'indent', '|',
  'borders', 'V', 'fill', 'V', 'fontColor', 'V',
];

const quiz = [
  { row: 7, height: 21, text: ['Прямой угол равен … градусов'], answer: '20', result: 'неверно', right: '' },
  { row: 8, height: 45, text: ['… - называется треугольник, у которого все три', 'стороны равны'], answer: 'разносторонний', result: 'неверно', right: '' },
  { row: 9, height: 21, text: ['… - это треугольник, имеющий 1 тупой угол'], answer: 'тупоугольный', result: 'верно', right: '' },
  { row: 10, height: 37, text: ['… - луч с началом в вершине угла,', 'делящий угол на две равные части'], answer: 'биссектрисса', result: 'верно', right: '' },
  { row: 11, height: 42, text: ['… - одна из двух сторон прямоугольного', 'треугольника, образующих прямой угол'], answer: 'гипотенуза', result: 'неверно', right: '' },
  { row: 12, height: 67, text: ['… - отрезок соединяющий вершину', 'треугольника с серединой противоположной', 'стороны'], answer: 'биссектрисса', result: 'неверно', right: '' },
  { row: 13, height: 46, text: ['… - треугольники, у которых углы соответственно', 'равны, а стороны одного пропорциональны'], answer: 'подобные', result: 'верно', right: '' },
  { row: 14, height: 61, text: ['… - перпендикуляр, проведённый из вершины', 'треугольника к прямой, содержащей', 'противоположную сторону.'], answer: 'высота', result: 'верно', right: 'высота' },
  { row: 15, height: 41, text: ['… - называется треугольник, у которого две', 'стороны равны.'], answer: 'равнобедренный', result: 'верно', right: 'равнобедренный' },
  { row: 16, height: 43, text: ['… - называется треугольник, у которого длины', 'трёх сторон попарно различны'], answer: 'равнобедренный', result: 'неверно', right: 'разносторонний' },
];

const controls = [
  ['label', 'textBox'],
  ['groupBox', 'button'],
  ['check', 'radio'],
  ['list', 'combo'],
  ['combo', 'combo'],
  ['scroll', 'spin'],
  ['props', 'code'],
  ['grid', 'run'],
];

const tray = ['network', 'office', 'shield', 'offline', 'speaker', 'bolt', 'usb', 'note', 'avast'];

const renderTool = (name, i) => {
  if (name === '|') return <Sep key={i} />;
  if (name === 'v' || name === 'V') {
    return <ArrowButton key={i} $on={name === 'V'} aria-label='Список' />;
  }
  return (
    <Tool key={i} aria-label={name}>
      {glyphs[name] ? <Icon name={name} /> : name}
    </Tool>
  );
};

const EndMark = () => (
  <svg width='6' height='8' viewBox='0 0 6 8' aria-hidden='true'>
    <path d='M0 1h6' stroke='#000' />
    <path d='M0 4h6L3 7z' fill='#000' />
  </svg>
);

const Empty = ({ height, count }) =>
  Array.from({ length: count }, (_, i) => <Cell key={i} $height={height} />);

const QuizRow = ({ item }) => {
  const { row, height, text, answer, result, right } = item;
  const last = row === 16;
  const edge = last ? 'thick' : 'thin';
  const inner = last ? height - 1 : height;
  return (
    <tr>
      <Head scope='row' $height={height}>{row}</Head>
      <Cell $height={height} $right='thick' $bottom='thin'>
        <CellText $height={height} $align='right'>{row - 6}</CellText>
      </Cell>
      <Cell $height={height} $right='thick' $bottom={edge} $fill={aqua}>
        <CellText $height={inner} $serif>
          {text.map((t) => (
            <span key={t}>{t}</span>
          ))}
        </CellText>
      </Cell>
      <Cell $height={height} $right='thin' $bottom='thin'>
        <CellText $height={height} $small={row !== 7} $align={row === 7 ? 'right' : 'left'}>
          {answer}
        </CellText>
      </Cell>
      <Cell $height={height} $right='thin' $bottom={edge} $fill={aqua}>
        <CellText $height={inner} $small>{result}</CellText>
      </Cell>
      <Cell $height={height} $right='thick' $bottom={edge}>
        <CellText $height={inner} $small>{right}</CellText>
      </Cell>
      <Empty height={height} count={5} />
    </tr>
  );
};

const TotalRow = ({ row, label, value }) => (
  <tr>
    <Head scope='row' $height={21}>{row}</Head>
    <Cell $height={21} $right='none' />
    <Cell $height={21} $right='thin' $bottom='none' $fill={blue}>
      <CellText $height={22} $serif $align='right'>{label}</CellText>
    </Cell>
    <Cell $height={21} $right='thin' $bottom='thin'>
      <CellText $height={21} $align='right'>{value}</CellText>
    </Cell>
    <Empty height={21} count={7} />
  </tr>
);

const Sheet = () => (
  <Table>
    <colgroup>
      {[26, 64, 390, 117, 75, 114, 64, 64, 64, 64].map((w, i) => (
        <col key={i} width={w} />
      ))}
      <col />
    </colgroup>
    <thead>
      <tr>
        <Head $height={18} />
        {['A', 'B', 'C', 'D', 'E', 'F', 'G', 'H', 'I', ''].map((c, i) => (
          <Head key={i} scope='col' $height={18} $selected={c === 'C'}>{c}</Head>
        ))}
      </tr>
    </thead>
    <tbody>
      {quiz.map((item) => (
        <QuizRow key={item.row} item={item} />
      ))}
      <tr>
        <Head scope='row'>17</Head>
        <Cell $height={17} />
        <Cell $height={17} />
        <Cell $height={17} $bottom='thin' />
        <Empty height={17} count={7} />
      </tr>
      <TotalRow row={18} label='Количество верных ответов' value='5' />
      <TotalRow row={19} label='Количество неверных ответов' value='5' />
      <tr>
        <Head scope='row'>20</Head>
        <Empty height={17} count={10} />
      </tr>
      <tr>
        <Head scope='row' $selected>21</Head>
        <Empty height={17} count={2} />
        <Cell $height={17}>
          <CellEditor aria-label='C21' defaultValue='5;ЕСЛИ(C18>6;4))' />
          <FillHandle />
        </Cell>
        <Empty height={17} count={7} />
      </tr>
      <tr>
        <Head scope='row'>22</Head>
        <Empty height={17} count={10} />
      </tr>
    </tbody>
  </Table>
);

const navPaths = ['M1 0v6M6 0v6L2 3z', 'M5 0v6L1 3z', 'M1 0v6l4-3z', 'M1 0v6l4-3zM6 0v6'];

const BookWindow = () => (
  <Book>
    <SheetArea>
      <Viewport>
        <Sheet />
      </Viewport>
      <VScroll>
        <ScrollButton aria-label='Вверх' />
        <VThumb>
          <Ridges />
        </VThumb>
        <ScrollButton aria-label='Вниз'>
          <svg width='5' height='4'><path d='M0 0h5L2.500 3z' fill='#333' /></svg>
        </ScrollButton>
      </VScroll>
    </SheetArea>
    <BottomBar>
      <TabNav>
        {navPaths.map((d) => (
          <button key={d} aria-label='Листы'>
            <svg width='7' height='6'><path d={d} fill='#000' stroke='#000' strokeWidth='.5' /></svg>
          </button>
        ))}
      </TabNav>
      <Tabs>
        <Tab><span>Тест</span></Tab>
        <Tab $active><span>Результат</span></Tab>
        <Tab><span>Лист3</span></Tab>
      </Tabs>
      <HScroll>
        <ScrollButton aria-label='Влево'>
          <svg width='4' height='6'><path d='M3.500.5L1 3l2.500 2.500' fill='none' stroke='#222' strokeWidth='1.500' /></svg>
        </ScrollButton>
        <HThumb>
          <Ridges $across />
        </HThumb>
        <HTrack />
        <ScrollButton aria-label='Вправо'>
          <svg width='4' height='6'><path d='M.5.5L3 3 .5 5.500' fill='none' stroke='#222' strokeWidth='1.500' /></svg>
        </ScrollButton>
      </HScroll>
    </BottomBar>
  </Book>
);

const FunctionDialog = () => (
  <Dialog role='dialog' aria-labelledby='dialog-title'>
    <DialogTitle>
      <h2 id='dialog-title'>Аргументы функции</h2>
      <CaptionButton $active aria-label='Закрыть'>
        <Cross color='#8a877e' weight={2} />
      </CaptionButton>
    </DialogTitle>
    <DialogBody onSubmit={(e) => e.preventDefault()}>
      <Args>
        <legend>ЕСЛИ</legend>
        {[
          ['Лог_выражение', 'C18>6', 'ЛОЖЬ'],
          ['Значение_если_истина', '4', '4'],
          ['Значение_если_ложь', '', null],
        ].map(([label, value, out], i) => (
          <React.Fragment key={label}>
            <ArgLabel htmlFor={`arg${i}`} $required={i === 0}>{label}</ArgLabel>
            <ArgField>
              <input id={`arg${i}`} defaultValue={value} />
              <button type='button' aria-label='Свернуть'>
                <Icon name='picker' />
              </button>
            </ArgField>
            <ArgValue>= {out || <b>любое</b>}</ArgValue>
          </React.Fragment>
        ))}
      </Args>
      <Total>= ЛОЖЬ</Total>
      <Description>
        Проверяет, выполняется ли условие, и возвращает одно значение, если оно выполняется, и другое
        значение, если нет.
      </Description>
      <ArgHelp>
        <dt>Значение_если_истина</dt>
        <dd>
          значение, которое возвращается, если 'лог_выражение' имеет значение ИСТИНА. Если не
          указано, возвращается значение ИСТИНА. Допустимая глубина вложенности - семь.
        </dd>
      </ArgHelp>
      <DialogFooter>
        <a href='#help'>Справка по этой функции</a>
        <p>Значение: ЛОЖЬ</p>
        <PushButton type='submit' $primary>ОК</PushButton>
        <PushButton type='button'>Отмена</PushButton>
      </DialogFooter>
    </DialogBody>
  </Dialog>
);

const FloatingHead = ({ children }) => (
  <FloatingTitle>
    {children}
    <svg width='10' height='5'><path d='M0 0h10L5 5z' fill='#4a4a48' /></svg>
    <Cross color='#4a4a48' />
  </FloatingTitle>
);

export default function App() {
  return (
    <Screen>
      <GlobalStyle />
      <TitleBar>
        <Icon name='excel' />
        <WindowTitle>Microsoft Excel - Книга1.xls</WindowTitle>
        <CaptionButtons>
          <CaptionButton aria-label='Свернуть'>
            <svg width='6' height='3'><path d='M.5.5h5v2h-5z' fill='#fff' stroke='#b5b2a8' /></svg>
          </CaptionButton>
          <CaptionButton aria-label='Восстановить'>
            <svg width='8' height='8'><path d='M3.500 0v4.500H8M0 3.500h4.500V8' fill='none' stroke='#b5b2a8' /></svg>
          </CaptionButton>
          <CaptionButton aria-label='Закрыть'>
            <Cross color='#b5b2a8' />
          </CaptionButton>
        </CaptionButtons>
      </TitleBar>
      <MenuBar>
        <Grip />
        <Tool as='span'>
          <Icon name='excelDoc' size={17} />
        </Tool>
        <Menu>
          {menu.map(([pre, key, post]) => (
            <MenuItem key={pre + key + post}>
              {pre}
              <u>{key}</u>
              {post}
            </MenuItem>
          ))}
        </Menu>
        <Ask>
          <AskInput placeholder='Введите вопрос' aria-label='Введите вопрос' />
          <ArrowButton $on aria-label='Список' />
        </Ask>
        <DocButtons>
          <button aria-label='Свернуть'>
            <svg width='9' height='9'><path d='M1 8h6' stroke='#000' strokeWidth='2' /></svg>
          </button>
          <button aria-label='Восстановить'>
            <svg width='9' height='9'>
              <path d='M3 3V1h5v4H6M1 4h5v4H1z' fill='none' stroke='#000' strokeWidth='1.400' />
            </svg>
          </button>
          <button aria-label='Закрыть'>
            <Cross />
          </button>
        </DocButtons>
      </MenuBar>
      <ToolbarDock>
        <Toolbar>
          <Grip />
          {standard.map(renderTool)}
          <ComboFrame $width={57}>
            <select aria-label='Масштаб'>
              <option>100%</option>
            </select>
          </ComboFrame>
          <Tool aria-label='Справка'>
            <Icon name='help' />
          </Tool>
          <ToolbarEnd aria-label='Параметры'>
            <EndMark />
          </ToolbarEnd>
        </Toolbar>
        <Toolbar>
          <Grip />
          <ComboFrame $width={128}>
            <select aria-label='Шрифт'>
              <option>Arial Cyr</option>
            </select>
          </ComboFrame>
          <ComboFrame $width={38}>
            <select aria-label='Размер'>
              <option>10</option>
            </select>
          </ComboFrame>
          <Sep />
          <Tool aria-label='Полужирный'><Letter>Ж</Letter></Tool>
          <Tool aria-label='Курсив'><Letter $italic>К</Letter></Tool>
          <Tool aria-label='Подчеркнутый'><Letter $underline>Ч</Letter></Tool>
          {formatting.map(renderTool)}
          <ToolbarEnd aria-label='Параметры'>
            <EndMark />
          </ToolbarEnd>
        </Toolbar>
      </ToolbarDock>
      <FormulaBar>
        <NameBox>
          <NameInput defaultValue='ЕСЛИ' aria-label='Имя' />
          <ArrowButton $on aria-label='Список' />
          <FormulaTools>
            <button aria-label='Отмена'>
              <Cross size={12} color='#8b0000' weight={2} />
            </button>
            <button aria-label='Ввод'>
              <svg width='12' height='12'>
                <path d='M1 6.500l3.500 4L11 1.500' fill='none' stroke='#0a8a0a' strokeWidth='2.200' />
              </svg>
            </button>
          </FormulaTools>
        </NameBox>
        <FxButton aria-label='Вставка функции'>fx</FxButton>
        <Formula role='textbox' aria-label='Строка формул'>
          =ЕСЛИ(C18&gt;8;5;
          <b>
            ЕСЛИ<i>(</i>C18&gt;6;4<i>)</i>
          </b>
          )
        </Formula>
      </FormulaBar>
      <Workspace>
        <BookWindow />
        <TaskPane>
          <PaneHeader>
            <svg width='8' height='5'><path d='M0 0h8L4 4z' fill='#b0ada6' /></svg>
            <Cross />
          </PaneHeader>
          <PaneBody>
            <PaneBand $height={25} $color='#f8f7f5' />
            <PaneBand $height={18} $color='#f0eeea' />
            <PaneSearch>
              <button aria-label='Найти'>
                <Icon name='go' size={18} />
              </button>
            </PaneSearch>
            <PaneBand $height={26} $color='#efece8' />
            <PaneBand $height={33} $color='#fbfbf9' />
            <PaneLink href='#new'>
              <Icon name='sheet' />
              Создать книгу…
            </PaneLink>
          </PaneBody>
        </TaskPane>
      </Workspace>
      <StatusBar>
        <StatusText $width={61}>Правка</StatusText>
        <StatusText $width={80}>Запись</StatusText>
        <StatusPanes>
          <StatusPane $width={34} />
          <StatusPane $width={112} />
          <StatusPane $width={26} />
          <StatusPane $width={29} />
          <StatusPane $width={26}>NUM</StatusPane>
          <StatusPane $width={29} />
          <StatusPane $width={25} />
          <StatusPane $width={33} />
        </StatusPanes>
      </StatusBar>
      <TaskBar>
        <StartButton aria-label='Пуск'>
          <Icon name='windows' size={18} />
        </StartButton>
        <QuickLaunch>
          <button aria-label='Устройства'><Icon name='drive' /></button>
          <button aria-label='avast'><Icon name='avast' /></button>
          <button aria-label='Firefox'><Icon name='firefox' /></button>
          <svg width='6' height='8'><path d='M1 1l4 3-4 3z' fill='none' stroke='#d5dcea' /></svg>
        </QuickLaunch>
        <TaskButton $active>
          <Icon name='excel' size={14} />
          Microsoft Excel - Книг...
        </TaskButton>
        <TaskButton>
          <Icon name='word' />
          Тест Excel.doc - Micro...
        </TaskButton>
        <Language>EN</Language>
        <Tray>
          {tray.map((name) => (
            <Icon key={name} name={name} />
          ))}
          <time>11:50</time>
        </Tray>
      </TaskBar>
      <Floating $x={328} $y={140}>
        <FloatingHead>Ос</FloatingHead>
        <FloatingRow>
          <Tool aria-label='Остановить запись'><Icon name='stop' /></Tool>
          <Sep />
          <Tool aria-label='Относительная ссылка'><Icon name='designMode' /></Tool>
        </FloatingRow>
      </Floating>
      <Floating $x={970} $y={432}>
        <FloatingHead>Фс</FloatingHead>
        {controls.map((row, r) => (
          <FloatingRow key={r}>
            {row.map((name, i) => (
              <ControlTool key={i} $pressed={name === 'grid'} aria-label={name}>
                <Icon name={name} />
              </ControlTool>
            ))}
          </FloatingRow>
        ))}
      </Floating>
      <FunctionDialog />
    </Screen>
  );
}
